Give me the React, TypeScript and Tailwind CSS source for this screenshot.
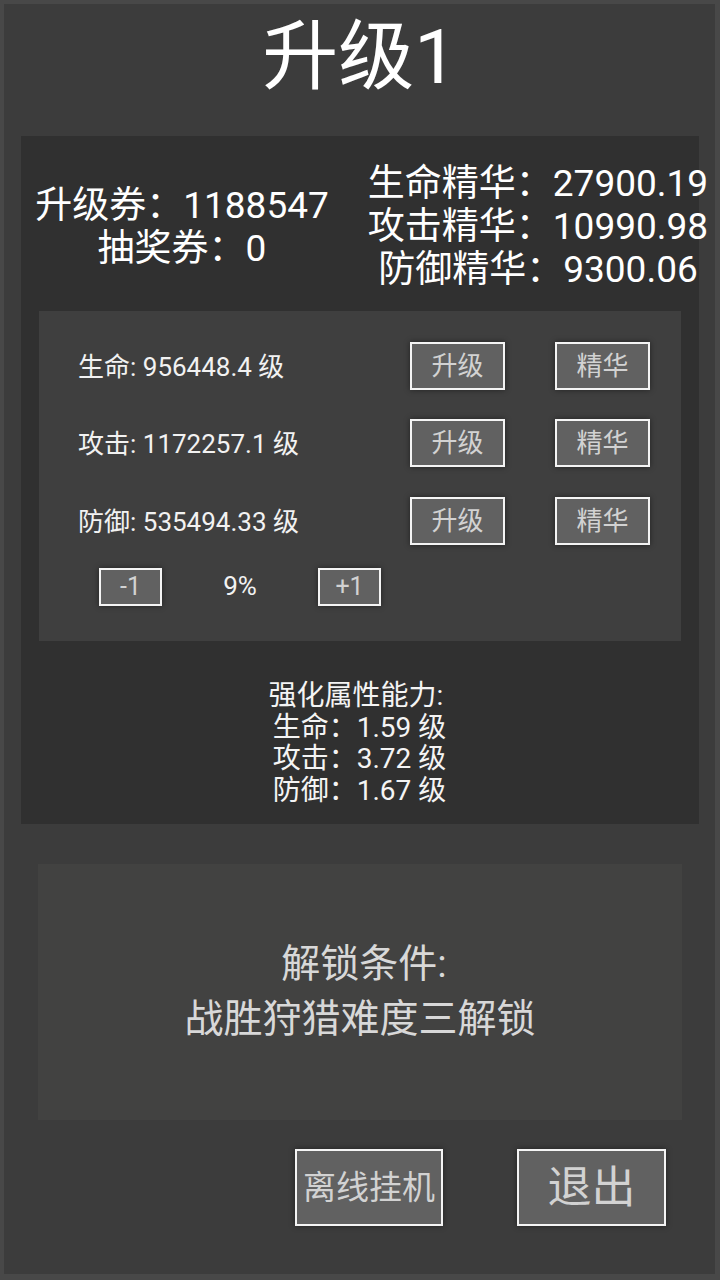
const font = { fontFamily: 'Roboto, "Noto Sans CJK SC", sans-serif' };

function Btn({ label, className }: { label: string; className: string }) {
  return (
    <div
      className={`flex items-center justify-center border-2 border-[#f4f4f4] bg-[#616161] text-[#d2d2d2] shadow-[0_0_6px_rgba(0,0,0,0.45)] ${className}`}
    >
      {label}
    </div>
  );
}

const stats = [
  { name: "生命", value: "956448.4" },
  { name: "攻击", value: "1172257.1" },
  { name: "防御", value: "535494.33" },
];

export default function App() {
  return (
    <div
      style={font}
      className="flex h-[1280px] w-[720px] flex-col overflow-hidden border-[4px] border-r-[5px] border-b-[6px] border-[#484848] bg-[#3c3c3c] text-white"
    >
      {/* title */}
      <div className="flex h-[132px] items-start justify-center pt-[9px] text-[76px] leading-[1.17]">
        升级1
      </div>

      {/* main panel */}
      <div className="ml-[17px] flex h-[688px] w-[678px] shrink-0 flex-col bg-[#303030]">
        <div className="flex h-[175px] shrink-0 items-center pt-[6px] text-[37px] leading-[43px]">
          <div className="w-[322px] shrink-0 whitespace-nowrap text-center">
            <div>升级券：1188547</div>
            <div>抽奖券：0</div>
          </div>
          <div className="w-[390px] shrink-0 whitespace-nowrap text-center">
            <div>生命精华：27900.19</div>
            <div>攻击精华：10990.98</div>
            <div>防御精华：9300.06</div>
          </div>
        </div>

        <div className="mx-[18px] h-[330px] shrink-0 bg-[#3f3f3f] pt-[31px] text-[26px]">
          {stats.map((s, i) => (
            <div
              key={s.name}
              className={`flex h-[48px] items-center ${i === 1 ? "mb-[30px]" : "mb-[29px]"}`}
            >
              <div className="w-[371px] shrink-0 whitespace-nowrap pl-[39px] pt-[2px] text-[#f2f2f2]">
                {s.name}: {s.value} 级
              </div>
              <Btn label="升级" className="h-[48px] w-[95px]" />
              <Btn label="精华" className="ml-[50px] h-[48px] w-[95px]" />
            </div>
          ))}
          <div className="-mt-[8px] flex h-[38px] items-center pl-[60px] pt-[3px]">
            <Btn label="-1" className="h-[38px] w-[63px] text-[25px]" />
            <div className="w-[156px] text-center text-[#f2f2f2]">9%</div>
            <Btn label="+1" className="h-[38px] w-[63px] text-[25px]" />
          </div>
        </div>

        <div className="whitespace-pre pr-[8px] pt-[39px] text-center text-[28px] leading-[31.7px] text-[#f4f4f4]">
          <div>强化属性能力:</div>
          <div> 生命：1.59 级</div>
          <div> 攻击：3.72 级</div>
          <div> 防御：1.67 级</div>
        </div>
      </div>

      {/* unlock panel */}
      <div className="ml-[34px] mt-[40px] flex h-[256px] w-[644px] shrink-0 flex-col items-center justify-center bg-[#424241] text-[39px] leading-[55px] text-[#d8d8d8]">
        <div className="pl-[8px]">解锁条件:</div>
        <div>战胜狩猎难度三解锁</div>
      </div>

      {/* bottom buttons */}
      <div className="mt-[29px] flex pl-[291px]">
        <Btn label="离线挂机" className="h-[77px] w-[148px] text-[33px]" />
        <Btn label="退出" className="ml-[74px] h-[77px] w-[149px] text-[44px]" />
      </div>
    </div>
  );
}
